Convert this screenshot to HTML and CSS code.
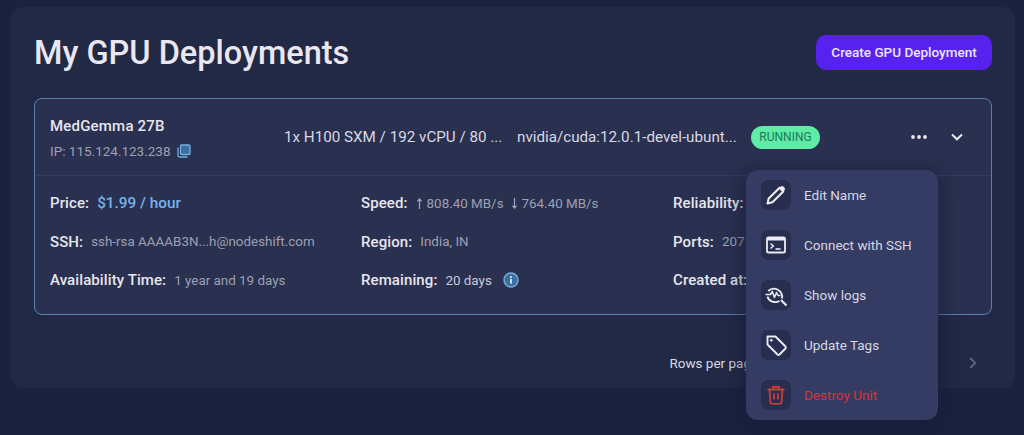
FILE: index.html
```html
<!DOCTYPE html>
<html lang="en">
<head>
<meta charset="utf-8">
<title>My GPU Deployments</title>
<link rel="stylesheet" href="styles.css">
</head>
<body>
<main class="panel">
  <header class="page-head">
    <h1 class="title">My GPU Deployments</h1>
    <button class="create-btn">Create GPU Deployment</button>
  </header>
  <section class="card">
    <div class="card-head">
      <div class="identity">
        <div class="name">MedGemma 27B</div>
        <div class="ip">IP: 115.124.123.238
          <svg class="copy" viewBox="0 0 14 14" width="14" height="14"><rect x="3.5" y="1" width="9.5" height="9.5" rx="1" fill="#3f6d9f" stroke="#74b0e2" stroke-width="1.3"/><path d="M1 3.5V11.5A1.5 1.5 0 0 0 2.5 13H10.5" fill="none" stroke="#74b0e2" stroke-width="1.3"/></svg>
        </div>
      </div>
      <div class="spec">1x H100 SXM / 192 vCPU / 80 ...</div>
      <div class="image">nvidia/cuda:12.0.1-devel-ubunt...</div>
      <div class="status-cell"><span class="status">RUNNING</span></div>
      <div class="actions">
        <svg viewBox="0 0 16 4" width="16" height="4"><circle cx="2" cy="2" r="1.9" fill="#e8e8f0"/><circle cx="8" cy="2" r="1.9" fill="#e8e8f0"/><circle cx="14" cy="2" r="1.9" fill="#e8e8f0"/></svg>
        <svg viewBox="0 0 12 8" width="12" height="8"><path d="M1 1.5L6 6.3L11 1.5" fill="none" stroke="#e8e8f0" stroke-width="2"/></svg>
      </div>
    </div>
    <div class="details">
      <div class="item"><span class="label">Price:</span><span class="price">$1.99 / hour</span></div>
      <div class="item"><span class="label">Speed:</span><span class="value speed"><svg class="arrow" viewBox="0 0 7 11" width="7" height="11"><path d="M3.5 11V1M1.4 3.4L3.5 1L5.6 3.4" fill="none" stroke="#a4a7b8" stroke-width="1.2"/></svg>808.40 MB/s<svg class="arrow down" viewBox="0 0 7 11" width="7" height="11"><path d="M3.5 0V10M1.4 7.6L3.5 10L5.6 7.6" fill="none" stroke="#a4a7b8" stroke-width="1.2"/></svg>764.40 MB/s</span></div>
      <div class="item"><span class="label">Reliability:</span><span class="value">99%</span></div>
      <div class="item"><span class="label">SSH:</span><span class="value">ssh-rsa AAAAB3N...h@nodeshift.com</span></div>
      <div class="item"><span class="label">Region:</span><span class="value">India, IN</span></div>
      <div class="item"><span class="label">Ports:</span><span class="value">20717</span></div>
      <div class="item"><span class="label">Availability Time:</span><span class="value">1 year and 19 days</span></div>
      <div class="item"><span class="label">Remaining:</span><span class="value bright">20 days</span>
        <svg class="info" viewBox="0 0 16 16" width="16" height="16"><circle cx="8" cy="8" r="7" fill="#3f6d9f" stroke="#74b0e2" stroke-width="1.4"/><rect x="7.1" y="7" width="1.8" height="4.6" fill="#d8e8f6"/><rect x="7.1" y="4.2" width="1.8" height="1.8" fill="#d8e8f6"/></svg>
      </div>
      <div class="item"><span class="label">Created at:</span><span class="value">Jun 2</span></div>
    </div>
  </section>
  <footer class="pager">
    <span class="rows">Rows per page: 10</span>
    <svg class="next" viewBox="0 0 8 12" width="8" height="12"><path d="M1.2 1L6.2 6L1.2 11" fill="none" stroke="#5d6480" stroke-width="1.8"/></svg>
  </footer>
</main>

<nav class="menu">
  <a class="menu-item"><span class="icon-box"><svg viewBox="0 0 24 24" width="24" height="24"><path d="M3.5 20.5L4.7 15.6L15.6 4.7L19.3 8.4L8.4 19.3Z" fill="none" stroke="#eceaf2" stroke-width="2.1" stroke-linejoin="round"/><path d="M16.8 3.5A1.8 1.8 0 0 1 19.3 3.5L20.5 4.7A1.8 1.8 0 0 1 20.5 7.2L19.6 8.1L15.9 4.4Z" fill="#eceaf2"/></svg></span>Edit Name</a>
  <a class="menu-item"><span class="icon-box"><svg viewBox="0 0 24 24" width="24" height="24"><rect x="3" y="4.5" width="18" height="15" rx="1.6" fill="none" stroke="#eceaf2" stroke-width="1.8"/><rect x="3" y="4.5" width="18" height="3" fill="#eceaf2"/><path d="M6.5 10.5L9.3 13L6.5 15.5" fill="none" stroke="#eceaf2" stroke-width="1.5"/><path d="M11.5 16H16.5" stroke="#eceaf2" stroke-width="1.6"/></svg></span>Connect with SSH</a>
  <a class="menu-item"><span class="icon-box"><svg viewBox="0 0 24 24" width="24" height="24"><path d="M4.2 8A8.3 8.3 0 0 1 18 15.5M3.4 13.6A8.3 8.3 0 0 0 15.5 18" fill="none" stroke="#eceaf2" stroke-width="1.8"/><path d="M1.5 11.5H6.5L8.3 8.5L10.5 14.5L12.5 9.5L14 12.5H16.5" fill="none" stroke="#eceaf2" stroke-width="1.5" stroke-linejoin="round"/><path d="M17 17L22.5 22.5" stroke="#eceaf2" stroke-width="2.1"/></svg></span>Show logs</a>
  <a class="menu-item"><span class="icon-box"><svg viewBox="0 0 24 24" width="24" height="24"><path d="M3.5 3.5H11.5L21.5 13.5A1.6 1.6 0 0 1 21.5 15.5L15.5 21.5A1.6 1.6 0 0 1 13.5 21.5L3.5 11.5Z" fill="none" stroke="#eceaf2" stroke-width="1.9" stroke-linejoin="round"/><circle cx="7.3" cy="7.3" r="1.3" fill="#eceaf2"/></svg></span>Update Tags</a>
  <a class="menu-item danger"><span class="icon-box"><svg viewBox="0 0 24 24" width="24" height="24"><path d="M3.5 6.5H20.5M9 6.5V3.8H15V6.5" fill="none" stroke="#c93f35" stroke-width="1.8"/><path d="M5.5 6.5L6.4 19A2 2 0 0 0 8.4 20.8H15.6A2 2 0 0 0 17.6 19L18.5 6.5" fill="none" stroke="#c93f35" stroke-width="1.8"/><path d="M10 10.5V16.5M14 10.5V16.5" stroke="#c93f35" stroke-width="1.8"/></svg></span>Destroy Unit</a>
</nav>
</body>
</html>
```
FILE: styles.css
```css
* { box-sizing: border-box; }
html, body { margin: 0; height: 100%; }
body {
  position: relative;
  height: 435px;
  overflow: hidden;
  padding: 7px 9px 0 11px;
  background: #1b2240;
  font-family: Roboto, "Liberation Sans", sans-serif;
  color: #e8e8f0;
}
.panel {
  height: 381px;
  padding: 28px 23px 0 23px;
  background: #222945;
  border-radius: 12px;
}
.page-head {
  display: flex;
  justify-content: space-between;
  align-items: center;
  height: 35px;
}
.title {
  margin: 0;
  font-size: 32.5px;
  font-weight: 500;
  color: #e9e7ef;
}
.create-btn {
  width: 176px;
  height: 35px;
  padding: 0 0 2px;
  border: 0;
  border-radius: 10px;
  background: #5822ee;
  color: #ebe6fb;
  font: 500 13.5px Roboto, sans-serif;
}
.card {
  margin-top: 28px;
  height: 217px;
  background: #2a3050;
  border: 1px solid #5b7fae;
  border-radius: 8px;
}
.card-head {
  display: flex;
  align-items: center;
  height: 77px;
  padding-left: 15px;
  border-bottom: 1px solid #363d60;
}
.identity { width: 234px; padding-top: 1px; }
.name { font-size: 15px; font-weight: 500; letter-spacing: 0.2px; color: #e6e6ee; }
.ip {
  display: flex;
  align-items: center;
  gap: 6px;
  margin-top: 8px;
  font-size: 13.5px;
  color: #9da0b2;
}
.spec { width: 233px; font-size: 15.2px; color: #d8d9e3; }
.image { width: 234px; font-size: 15.2px; color: #d8d9e3; }
.status-cell { width: 160px; }
.status {
  display: inline-block;
  width: 69px;
  height: 23px;
  line-height: 23px;
  text-align: center;
  border-radius: 12px;
  background: #5eeca6;
  color: #1f7a57;
  font-size: 12px;
}
.actions {
  display: flex;
  align-items: center;
  gap: 24px;
}
.details {
  display: grid;
  grid-template-columns: 311px 312px 1fr;
  grid-auto-rows: 38.5px;
  padding: 8px 0 0 15px;
  align-items: center;
}
.item { display: flex; align-items: center; gap: 8px; white-space: nowrap; }
.label { font-size: 15px; font-weight: 500; letter-spacing: 0.1px; color: #e6e6ee; }
.value { font-size: 13.4px; color: #9da0b2; }
.value.bright { color: #c9cad6; }
.speed { display: flex; align-items: center; gap: 4px; }
.speed .down { margin-left: 3px; }
.price { font-size: 15.3px; font-weight: 500; color: #74b4ea; }
.info { margin-left: 3px; }
.pager {
  display: flex;
  justify-content: flex-end;
  align-items: center;
  margin-top: 38px;
  height: 20px;
}
.rows { font-size: 13.5px; color: #d8d9e3; margin-right: 189px; }
.next { margin-right: 15px; }
.menu {
  position: absolute;
  left: 746px;
  top: 170px;
  width: 192px;
  height: 250px;
  padding: 10px 15px;
  display: flex;
  flex-direction: column;
  gap: 20px;
  background: #353c63;
  border-radius: 12px;
  box-shadow: 0 5px 14px 8px rgba(20, 25, 50, 0.4);
}
.menu-item {
  display: flex;
  align-items: center;
  gap: 13px;
  height: 30px;
  font-size: 13.5px;
  color: #d6d7e4;
}
.menu-item.danger { color: #d7343a; }
.icon-box {
  display: flex;
  align-items: center;
  justify-content: center;
  width: 30px;
  height: 30px;
  border-radius: 7px;
  background: #282e50;
}
```
